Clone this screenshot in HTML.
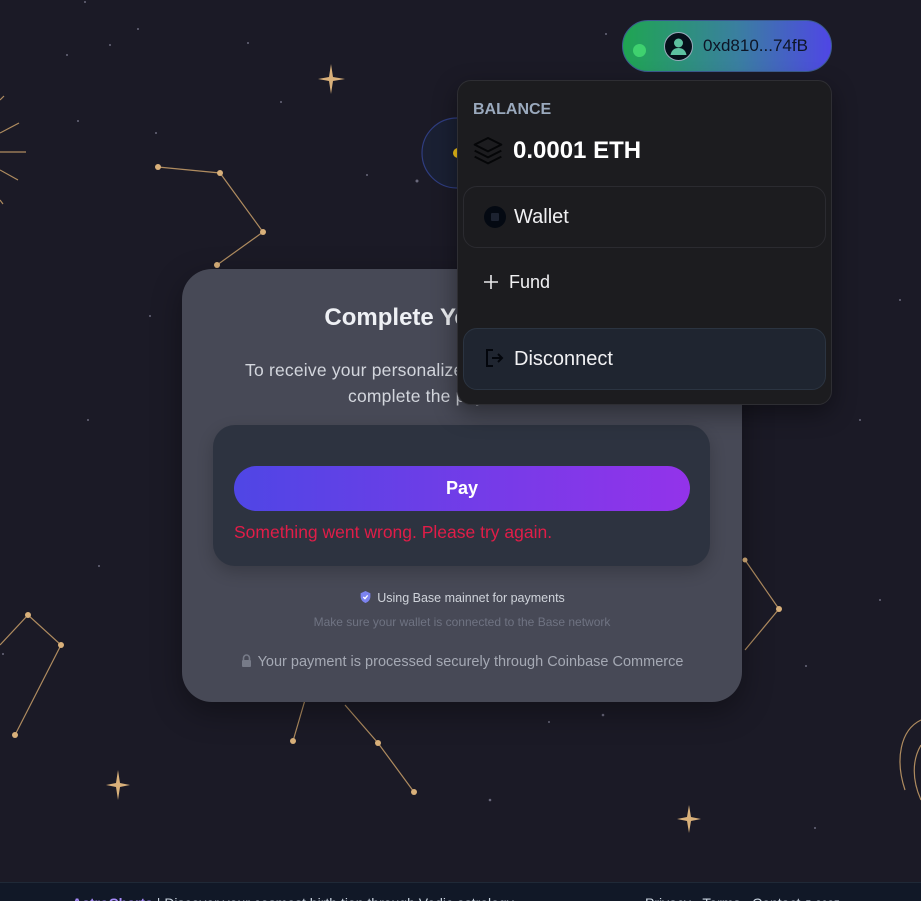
<!DOCTYPE html>
<html><head><meta charset="utf-8"><style>
*{margin:0;padding:0;box-sizing:border-box}
html,body{width:921px;height:901px;overflow:hidden}
body{background:#1b1a26;font-family:"Liberation Sans",sans-serif;position:relative}
.abs{position:absolute}
svg.bg{position:absolute;left:0;top:0}
.card{left:182px;top:269px;width:560px;height:433px;border-radius:30px;background:#474956;box-shadow:0 10px 30px rgba(0,0,0,.35)}
.c{position:absolute;left:0;width:560px;text-align:center}
</style></head><body>
<svg class="bg" width="921" height="901" viewBox="0 0 921 901">
<g fill="#8a8aa0" opacity=".7">
<circle cx="85" cy="2" r="1"/><circle cx="138" cy="29" r="1"/><circle cx="110" cy="45" r="1"/><circle cx="67" cy="55" r="1"/><circle cx="248" cy="43" r="1"/><circle cx="281" cy="102" r="1"/><circle cx="156" cy="133" r="1"/><circle cx="78" cy="121" r="1"/><circle cx="367" cy="175" r="1"/><circle cx="417" cy="181" r="1.5"/><circle cx="606" cy="34" r="1"/><circle cx="88" cy="420" r="1"/><circle cx="150" cy="316" r="1"/><circle cx="99" cy="566" r="1"/><circle cx="603" cy="715" r="1.3"/><circle cx="549" cy="722" r="1"/><circle cx="490" cy="800" r="1.3"/><circle cx="815" cy="828" r="1"/><circle cx="806" cy="666" r="1"/><circle cx="880" cy="600" r="1"/><circle cx="900" cy="300" r="1"/><circle cx="860" cy="420" r="1"/><circle cx="3" cy="654" r="1"/>
</g>
<g stroke="#c9a06a" stroke-width="1.2" fill="none" opacity=".85">
<polyline points="158,167 220,173 263,232 217,265"/>
<polyline points="0,645 28,615 61,645 15,735"/>
<polyline points="745,560 779,609 745,650"/>
<polyline points="305,700 293,741"/><polyline points="345,705 378,743 414,792"/>
<line x1="0" y1="152" x2="26" y2="152"/><line x1="0" y1="133" x2="19" y2="123"/><line x1="0" y1="170" x2="18" y2="180"/><line x1="0" y1="100" x2="4" y2="96"/><line x1="0" y1="200" x2="3" y2="204"/>
<path d="M921 720 C900 730 895 760 905 790 M921 745 C912 760 912 780 921 800"/>
</g>
<g fill="#d9b07a">
<circle cx="158" cy="167" r="3"/><circle cx="220" cy="173" r="3"/><circle cx="263" cy="232" r="3"/><circle cx="217" cy="265" r="3"/>
<circle cx="28" cy="615" r="3"/><circle cx="61" cy="645" r="3"/><circle cx="15" cy="735" r="3"/>
<circle cx="779" cy="609" r="3"/><circle cx="745" cy="560" r="2.5"/><circle cx="293" cy="741" r="3"/><circle cx="378" cy="743" r="3"/><circle cx="414" cy="792" r="3"/>
<path d="M331 64 L333 77 L345 79 L333 81 L331 94 L329 81 L318 79 L329 77Z"/>
<path d="M118 770 L120 783 L130 785 L120 787 L118 800 L116 787 L106 785 L116 783Z"/>
<path d="M689 805 L691 817 L701 819 L691 821 L689 833 L687 821 L677 819 L687 817Z"/>
</g>
<circle cx="457" cy="153" r="35" fill="#1a2033" stroke="#2f3d80" stroke-width="1.2"/>
<circle cx="458" cy="153" r="5" fill="#f5c518"/>
</svg>

<div class="abs card">
<div class="c" style="top:35px;font-size:24px;font-weight:bold;color:#eef0f4">Complete Your Payment</div>
<div class="c" style="top:88px;font-size:17.5px;line-height:26px;color:#d3d6dd;letter-spacing:.2px">To receive your personalized astrology reading, please<br>complete the payment below</div>
<div class="abs" style="left:31px;top:156px;width:497px;height:141px;border-radius:22px;background:#2d3340;box-shadow:0 6px 16px rgba(0,0,0,.2)">
<div class="abs" style="left:21px;top:41px;width:456px;height:45px;border-radius:23px;background:linear-gradient(90deg,#4f46e5,#9333ea);color:#fff;font-weight:bold;font-size:18px;text-align:center;line-height:45px">Pay</div>
<div class="abs" style="left:21px;top:97px;font-size:17.5px;color:#e11d48">Something went wrong. Please try again.</div>
</div>
<div class="c" style="top:321px;font-size:12.5px;color:#cfd3da"><svg width="13" height="14" viewBox="0 0 24 24" style="vertical-align:-2px;margin-right:5px"><path d="M12 1 3 5v6c0 6 4 10 9 12 5-2 9-6 9-12V5z" fill="#7c83f0"/><path d="M8 12l3 3 5-6" stroke="#fff" stroke-width="2.5" fill="none"/></svg>Using Base mainnet for payments</div>
<div class="c" style="top:346px;font-size:12px;color:#6f7382">Make sure your wallet is connected to the Base network</div>
<div class="c" style="top:385px;font-size:14.5px;color:#a5a9b4"><svg width="11" height="13" viewBox="0 0 11 13" style="vertical-align:-1px;margin-right:6px"><path d="M2.5 6V4a3 3 0 016 0v2" stroke="#777b88" stroke-width="1.6" fill="none"/><rect x="1" y="6" width="9" height="7" rx="1" fill="#777b88"/></svg>Your payment is processed securely through Coinbase Commerce</div>
</div>

<div class="abs" style="left:622px;top:20px;width:210px;height:52px;border-radius:26px;background:linear-gradient(90deg,#1fa552,#3a7fa0 55%,#4f46e5);border:1px solid #3b5b8f">
<div class="abs" style="left:10px;top:23px;width:13px;height:13px;border-radius:50%;background:#3fd16f"></div>
<div class="abs" style="left:41px;top:11px;width:29px;height:29px;border-radius:50%;background:#05101a;border:1px solid #9ab"><svg width="27" height="27" viewBox="0 0 27 27"><circle cx="13.5" cy="10" r="4.5" fill="#5cc0a0"/><path d="M5.5 22c1-5 4-7 8-7s7 2 8 7z" fill="#5cc0a0"/></svg></div>
<div class="abs" style="left:80px;top:15px;font-size:17px;color:#0d1526">0xd810...74fB</div>
</div>

<div class="abs" style="left:457px;top:80px;width:375px;height:325px;border-radius:14px;background:#1c1c1f;border:1px solid #2e2e33;box-shadow:0 8px 24px rgba(0,0,0,.4)">
<div class="abs" style="left:15px;top:20px;font-size:16px;font-weight:bold;color:#9aa9bd">BALANCE</div>
<svg class="abs" style="left:14px;top:53px" width="32" height="32" viewBox="0 0 24 24" fill="none" stroke="#050608" stroke-width="1.5" stroke-linejoin="round"><path d="M12 3 2 8l10 5 10-5z"/><path d="M2 12.5l10 5 10-5"/><path d="M2 17l10 5 10-5"/></svg>
<div class="abs" style="left:55px;top:56px;font-size:24px;font-weight:bold;color:#fff">0.0001 ETH</div>
<div class="abs" style="left:5px;top:105px;width:363px;height:62px;border-radius:14px;border:1px solid #2b2b30">
<div class="abs" style="left:20px;top:19px;width:22px;height:22px;border-radius:50%;background:#040912"><div class="abs" style="left:7px;top:7px;width:8px;height:8px;border-radius:1px;background:#1c2230"></div></div>
<div class="abs" style="left:50px;top:19px;font-size:20px;color:#f1f1f3">Wallet</div>
</div>
<svg class="abs" style="left:25px;top:193px" width="16" height="16" viewBox="0 0 16 16"><path d="M8 1v14M1 8h14" stroke="#e8e8ea" stroke-width="1.6"/></svg>
<div class="abs" style="left:51px;top:191px;font-size:18px;color:#f1f1f3">Fund</div>
<div class="abs" style="left:5px;top:247px;width:363px;height:62px;border-radius:14px;background:#1f2530;border:1px solid #2b3441">
<svg class="abs" style="left:20px;top:19px" width="20" height="20" viewBox="0 0 20 20" fill="none" stroke="#03060c" stroke-width="2"><path d="M9 2H3v16h6"/><path d="M8 10h10M14 6l4 4-4 4"/></svg>
<div class="abs" style="left:50px;top:19px;font-size:20px;color:#f1f1f3">Disconnect</div>
</div>
</div>

<div class="abs" style="left:0;top:882px;width:921px;height:19px;background:#111827;border-top:1px solid #1f2937;overflow:hidden">
<div class="abs" style="left:72px;top:12px;font-size:14px;color:#cbd5e1;white-space:nowrap"><b style="color:#a78bfa">AstroCharts</b> | Discover your cosmost birth tion through Vedic astrology</div>
<div class="abs" style="left:645px;top:12px;font-size:14px;color:#cbd5e1;white-space:nowrap">Privacy &nbsp; Terms &nbsp; Contact <span style="font-size:11px">© 2025</span></div>
</div>
</body></html>
